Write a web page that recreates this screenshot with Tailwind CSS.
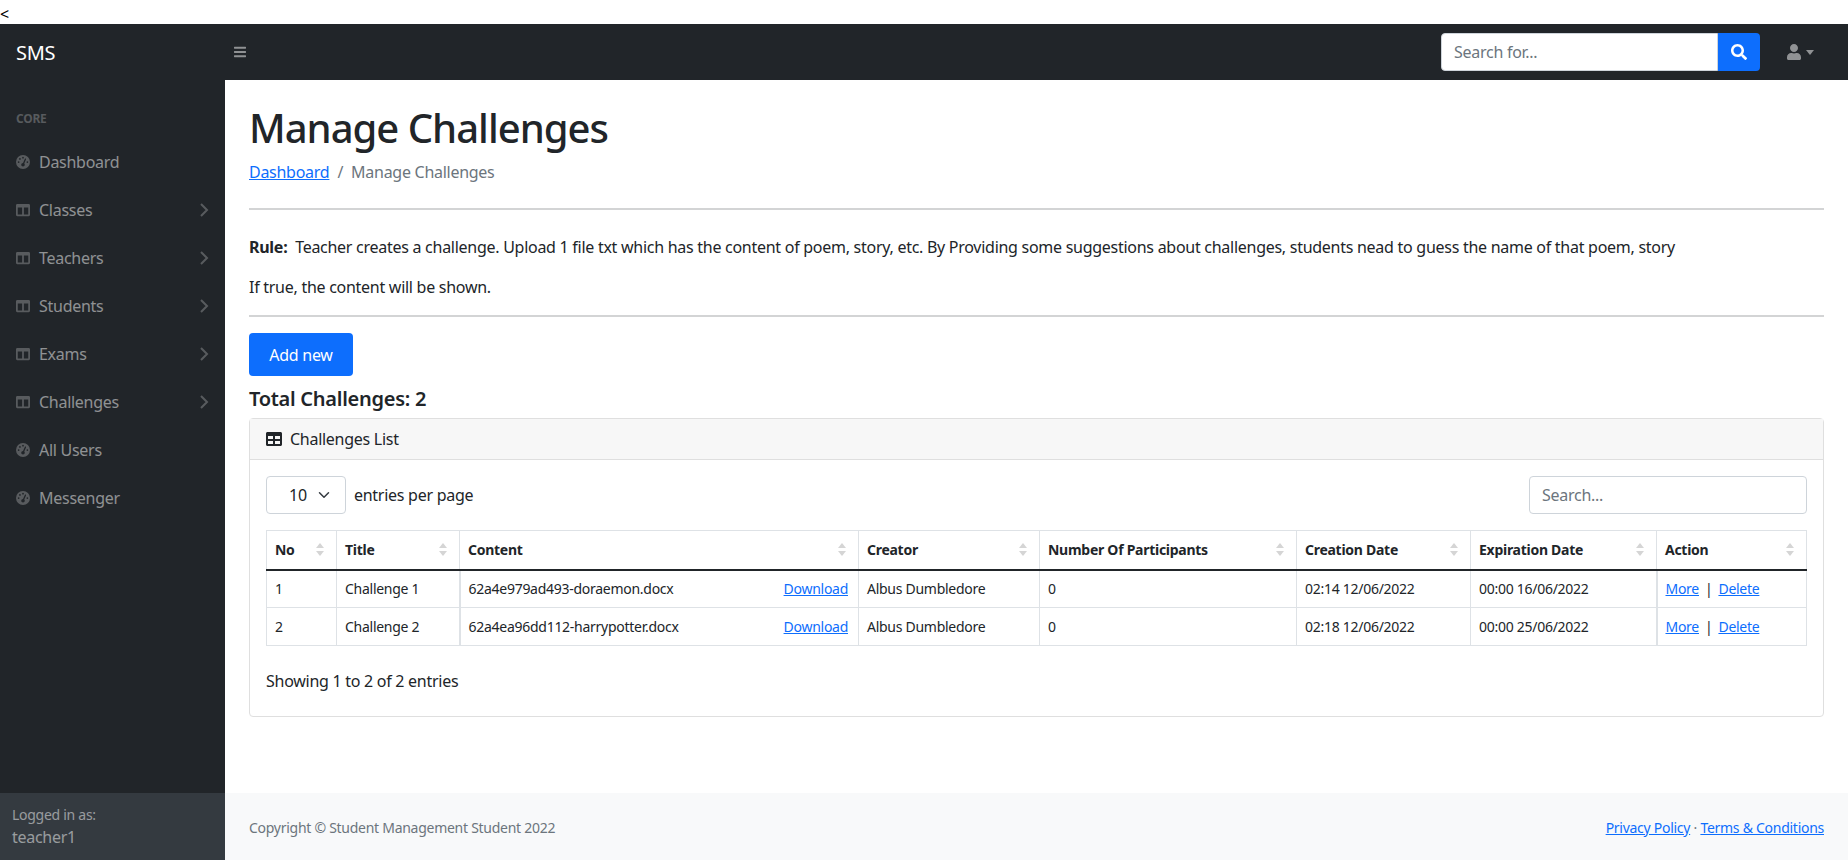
<!DOCTYPE html>
<html lang="en">
<head>
    <meta charset="UTF-8">
    <title>Manage Challenges</title>
    <script src="https://cdn.jsdelivr.net/npm/@tailwindcss/browser@4"></script>
</head>
<body class="h-screen overflow-hidden flex flex-col bg-white text-[#212529] font-['Noto_Sans',sans-serif] text-base tracking-[-0.017em]">
    <div class="h-6 leading-7 text-black shrink-0">&lt;</div>

    <!-- Top nav -->
    <nav class="h-14 shrink-0 bg-[#212529] flex items-center">
        <a href="#" class="w-[225px] pl-4 text-xl text-white pt-0.5">SMS</a>
        <button class="ml-[9px] text-white/50">
            <svg class="w-3 h-3.5" viewBox="0 0 448 512" fill="currentColor"><path d="M16 132h416c8.837 0 16-7.163 16-16V76c0-8.837-7.163-16-16-16H16C7.163 60 0 67.163 0 76v40c0 8.837 7.163 16 16 16zm0 160h416c8.837 0 16-7.163 16-16v-40c0-8.837-7.163-16-16-16H16c-8.837 0-16 7.163-16 16v40c0 8.837 7.163 16 16 16zm0 160h416c8.837 0 16-7.163 16-16v-40c0-8.837-7.163-16-16-16H16c-8.837 0-16 7.163-16 16v40c0 8.837 7.163 16 16 16z"/></svg>
        </button>
        <div class="ml-auto flex items-center">
            <div class="flex h-[38px] w-[319px]">
                <input class="flex-1 min-w-0 bg-white rounded-l px-3 border border-[#ced4da] placeholder:text-[#6c757d]" placeholder="Search for...">
                <button class="w-[42px] bg-[#0d6efd] rounded-r flex items-center justify-center">
                    <svg class="w-4 h-4 text-white" viewBox="0 0 512 512" fill="currentColor"><path d="M505 442.7L405.3 343c-4.5-4.5-10.6-7-17-7H372c27.6-35.3 44-79.7 44-128C416 93.1 322.9 0 208 0S0 93.1 0 208s93.1 208 208 208c48.3 0 92.7-16.4 128-44v16.3c0 6.4 2.5 12.5 7 17l99.7 99.7c9.4 9.4 24.6 9.4 33.9 0l28.3-28.3c9.4-9.4 9.4-24.6.1-34zM208 336c-70.7 0-128-57.2-128-128 0-70.7 57.2-128 128-128 70.7 0 128 57.2 128 128 0 70.7-57.2 128-128 128z"/></svg>
                </button>
            </div>
            <div class="ml-[27px] mr-[34px] flex items-center text-white/50">
                <svg class="w-3.5 h-4" viewBox="0 0 448 512" fill="currentColor"><path d="M224 256c70.7 0 128-57.3 128-128S294.7 0 224 0 96 57.3 96 128s57.3 128 128 128zm89.6 32h-16.7c-22.2 10.2-46.9 16-72.9 16s-50.6-5.8-72.9-16h-16.7C60.2 288 0 348.2 0 422.4V464c0 26.5 21.5 48 48 48h352c26.5 0 48-21.5 48-48v-41.6c0-74.2-60.2-134.4-134.4-134.4z"/></svg>
                <span class="ml-[5px] border-x-[4px] border-t-[5px] border-x-transparent border-t-current"></span>
            </div>
        </div>
    </nav>

    <div class="flex-1 min-h-0 flex">
        <!-- Sidebar -->
        <aside class="w-[225px] shrink-0 bg-[#212529] flex flex-col text-white/50">
            <div class="flex-1">
                <div class="pt-[30px] pb-[10px] px-4 text-xs font-bold leading-[18px] text-white/25">CORE</div>
                <a href="#" class="h-12 px-4 flex items-center">
                    <svg class="w-3.5 h-3.5 mr-[9px] text-white/25" viewBox="0 0 512 512" fill="currentColor"><path d="M0 256a256 256 0 1 1 512 0A256 256 0 1 1 0 256zM288 96a32 32 0 1 0 -64 0 32 32 0 1 0 64 0zM256 416c35.3 0 64-28.7 64-64c0-17.4-6.9-33.1-18.1-44.6L366 161.7c5.3-12.1-.2-26.3-12.3-31.6s-26.3 .2-31.6 12.3L257.9 288c-.6 0-1.3 0-1.9 0c-35.3 0-64 28.7-64 64s28.7 64 64 64zM176 144a32 32 0 1 0 -64 0 32 32 0 1 0 64 0zM96 288a32 32 0 1 0 0-64 32 32 0 1 0 0 64zm352-32a32 32 0 1 0 -64 0 32 32 0 1 0 64 0z"/></svg>
                    Dashboard
                </a>
                <a href="#" class="h-12 px-4 flex items-center">
                    <svg class="w-3.5 h-3.5 mr-[9px] text-white/25" viewBox="0 0 512 512" fill="currentColor"><path d="M464 32H48C21.49 32 0 53.49 0 80v352c0 26.51 21.49 48 48 48h416c26.51 0 48-21.49 48-48V80c0-26.51-21.49-48-48-48zM224 416H64V160h160v256zm224 0H288V160h160v256z"/></svg>
                    Classes
                    <svg class="ml-auto w-2.5 h-3.5 text-white/25" viewBox="0 0 10 14" fill="none" stroke="currentColor" stroke-width="2"><path d="M2 1l6 6-6 6"/></svg>
                </a>
                <a href="#" class="h-12 px-4 flex items-center">
                    <svg class="w-3.5 h-3.5 mr-[9px] text-white/25" viewBox="0 0 512 512" fill="currentColor"><path d="M464 32H48C21.49 32 0 53.49 0 80v352c0 26.51 21.49 48 48 48h416c26.51 0 48-21.49 48-48V80c0-26.51-21.49-48-48-48zM224 416H64V160h160v256zm224 0H288V160h160v256z"/></svg>
                    Teachers
                    <svg class="ml-auto w-2.5 h-3.5 text-white/25" viewBox="0 0 10 14" fill="none" stroke="currentColor" stroke-width="2"><path d="M2 1l6 6-6 6"/></svg>
                </a>
                <a href="#" class="h-12 px-4 flex items-center">
                    <svg class="w-3.5 h-3.5 mr-[9px] text-white/25" viewBox="0 0 512 512" fill="currentColor"><path d="M464 32H48C21.49 32 0 53.49 0 80v352c0 26.51 21.49 48 48 48h416c26.51 0 48-21.49 48-48V80c0-26.51-21.49-48-48-48zM224 416H64V160h160v256zm224 0H288V160h160v256z"/></svg>
                    Students
                    <svg class="ml-auto w-2.5 h-3.5 text-white/25" viewBox="0 0 10 14" fill="none" stroke="currentColor" stroke-width="2"><path d="M2 1l6 6-6 6"/></svg>
                </a>
                <a href="#" class="h-12 px-4 flex items-center">
                    <svg class="w-3.5 h-3.5 mr-[9px] text-white/25" viewBox="0 0 512 512" fill="currentColor"><path d="M464 32H48C21.49 32 0 53.49 0 80v352c0 26.51 21.49 48 48 48h416c26.51 0 48-21.49 48-48V80c0-26.51-21.49-48-48-48zM224 416H64V160h160v256zm224 0H288V160h160v256z"/></svg>
                    Exams
                    <svg class="ml-auto w-2.5 h-3.5 text-white/25" viewBox="0 0 10 14" fill="none" stroke="currentColor" stroke-width="2"><path d="M2 1l6 6-6 6"/></svg>
                </a>
                <a href="#" class="h-12 px-4 flex items-center">
                    <svg class="w-3.5 h-3.5 mr-[9px] text-white/25" viewBox="0 0 512 512" fill="currentColor"><path d="M464 32H48C21.49 32 0 53.49 0 80v352c0 26.51 21.49 48 48 48h416c26.51 0 48-21.49 48-48V80c0-26.51-21.49-48-48-48zM224 416H64V160h160v256zm224 0H288V160h160v256z"/></svg>
                    Challenges
                    <svg class="ml-auto w-2.5 h-3.5 text-white/25" viewBox="0 0 10 14" fill="none" stroke="currentColor" stroke-width="2"><path d="M2 1l6 6-6 6"/></svg>
                </a>
                <a href="#" class="h-12 px-4 flex items-center">
                    <svg class="w-3.5 h-3.5 mr-[9px] text-white/25" viewBox="0 0 512 512" fill="currentColor"><path d="M0 256a256 256 0 1 1 512 0A256 256 0 1 1 0 256zM288 96a32 32 0 1 0 -64 0 32 32 0 1 0 64 0zM256 416c35.3 0 64-28.7 64-64c0-17.4-6.9-33.1-18.1-44.6L366 161.7c5.3-12.1-.2-26.3-12.3-31.6s-26.3 .2-31.6 12.3L257.9 288c-.6 0-1.3 0-1.9 0c-35.3 0-64 28.7-64 64s28.7 64 64 64zM176 144a32 32 0 1 0 -64 0 32 32 0 1 0 64 0zM96 288a32 32 0 1 0 0-64 32 32 0 1 0 0 64zm352-32a32 32 0 1 0 -64 0 32 32 0 1 0 64 0z"/></svg>
                    All Users
                </a>
                <a href="#" class="h-12 px-4 flex items-center">
                    <svg class="w-3.5 h-3.5 mr-[9px] text-white/25" viewBox="0 0 512 512" fill="currentColor"><path d="M0 256a256 256 0 1 1 512 0A256 256 0 1 1 0 256zM288 96a32 32 0 1 0 -64 0 32 32 0 1 0 64 0zM256 416c35.3 0 64-28.7 64-64c0-17.4-6.9-33.1-18.1-44.6L366 161.7c5.3-12.1-.2-26.3-12.3-31.6s-26.3 .2-31.6 12.3L257.9 288c-.6 0-1.3 0-1.9 0c-35.3 0-64 28.7-64 64s28.7 64 64 64zM176 144a32 32 0 1 0 -64 0 32 32 0 1 0 64 0zM96 288a32 32 0 1 0 0-64 32 32 0 1 0 0 64zm352-32a32 32 0 1 0 -64 0 32 32 0 1 0 64 0z"/></svg>
                    Messenger
                </a>
            </div>
            <div class="h-[67px] bg-[#343a40] px-3 pt-3">
                <div class="text-sm leading-5">Logged in as:</div>
                <div class="leading-6">teacher1</div>
            </div>
        </aside>

        <!-- Main -->
        <main class="flex-1 min-w-0 flex flex-col">
            <div class="flex-1 px-6">
                <h1 class="mt-6 text-[40px] leading-[48px] font-medium tracking-[-0.025em]">Manage Challenges</h1>
                <div class="mt-2 flex leading-6">
                    <a href="#" class="text-[#0d6efd] underline">Dashboard</a>
                    <span class="px-2 text-[#6c757d]">/</span>
                    <span class="text-[#6c757d]">Manage Challenges</span>
                </div>
                <hr class="mt-6 border-t-2 border-[#d3d4d5]">
                <p class="mt-[25px] leading-6"><b>Rule:</b>&nbsp; Teacher creates a challenge. Upload 1 file txt which has the content of poem, story, etc. By Providing some suggestions about challenges, students nead to guess the name of that poem, story</p>
                <p class="mt-4 leading-6">If true, the content will be shown.</p>
                <hr class="mt-4 border-t-2 border-[#d3d4d5]">
                <button class="mt-4 h-[43px] w-[104px] bg-[#0d6efd] text-white rounded">Add new</button>
                <h2 class="mt-[11px] text-xl leading-6 font-semibold">Total Challenges: 2</h2>

                <!-- Card -->
                <div class="mt-[7px] border border-[#dfdfdf] rounded">
                    <div class="h-[41px] bg-[#f7f7f7] border-b border-[#dfdfdf] flex items-center px-4">
                        <svg class="w-4 h-4 mr-2" viewBox="0 0 512 512" fill="currentColor"><path d="M464 32H48C21.49 32 0 53.49 0 80v352c0 26.51 21.49 48 48 48h416c26.51 0 48-21.49 48-48V80c0-26.51-21.49-48-48-48zM224 416H64v-96h160v96zm0-160H64v-96h160v96zm224 160H288v-96h160v96zm0-160H288v-96h160v96z"/></svg>
                        Challenges List
                    </div>
                    <div class="p-4 pb-0">
                        <div class="flex items-center justify-between">
                            <div class="flex items-center">
                                <div class="w-20 h-[38px] border border-[#ced4da] rounded flex items-center pl-[22px]">
                                    10
                                    <svg class="ml-[11px] w-3 h-3" viewBox="0 0 16 16" fill="none" stroke="#343a40" stroke-width="2" stroke-linecap="round" stroke-linejoin="round"><path d="M2 5l6 6 6-6"/></svg>
                                </div>
                                <span class="ml-2">entries per page</span>
                            </div>
                            <input class="w-[278px] h-[38px] border border-[#ced4da] rounded px-3 placeholder:text-[#6c757d]" placeholder="Search...">
                        </div>
                        <table class="mt-[16px] w-full table-fixed border-collapse text-sm">
                            <colgroup>
                                <col class="w-[70px]"><col class="w-[123px]"><col class="w-[399px]"><col class="w-[181px]"><col class="w-[257px]"><col class="w-[174px]"><col class="w-[186px]"><col>
                            </colgroup>
                            <thead>
                                <tr class="h-[39px] font-bold text-left">
                                    <th class="border border-[#dee2e6] border-b-2 border-b-[#212529] px-2">
                                        <div class="flex items-center justify-between">No
                                            <span class="flex flex-col gap-[3px] mr-1">
                                                <span class="border-x-[4px] border-b-[5px] border-x-transparent border-b-[#d5d5d5]"></span>
                                                <span class="border-x-[4px] border-t-[5px] border-x-transparent border-t-[#d5d5d5]"></span>
                                            </span>
                                        </div>
                                    </th>
                                    <th class="border border-[#dee2e6] border-b-2 border-b-[#212529] px-2">
                                        <div class="flex items-center justify-between">Title
                                            <span class="flex flex-col gap-[3px] mr-1">
                                                <span class="border-x-[4px] border-b-[5px] border-x-transparent border-b-[#d5d5d5]"></span>
                                                <span class="border-x-[4px] border-t-[5px] border-x-transparent border-t-[#d5d5d5]"></span>
                                            </span>
                                        </div>
                                    </th>
                                    <th class="border border-[#dee2e6] border-b-2 border-b-[#212529] px-2">
                                        <div class="flex items-center justify-between">Content
                                            <span class="flex flex-col gap-[3px] mr-1">
                                                <span class="border-x-[4px] border-b-[5px] border-x-transparent border-b-[#d5d5d5]"></span>
                                                <span class="border-x-[4px] border-t-[5px] border-x-transparent border-t-[#d5d5d5]"></span>
                                            </span>
                                        </div>
                                    </th>
                                    <th class="border border-[#dee2e6] border-b-2 border-b-[#212529] px-2">
                                        <div class="flex items-center justify-between">Creator
                                            <span class="flex flex-col gap-[3px] mr-1">
                                                <span class="border-x-[4px] border-b-[5px] border-x-transparent border-b-[#d5d5d5]"></span>
                                                <span class="border-x-[4px] border-t-[5px] border-x-transparent border-t-[#d5d5d5]"></span>
                                            </span>
                                        </div>
                                    </th>
                                    <th class="border border-[#dee2e6] border-b-2 border-b-[#212529] px-2">
                                        <div class="flex items-center justify-between">Number Of Participants
                                            <span class="flex flex-col gap-[3px] mr-1">
                                                <span class="border-x-[4px] border-b-[5px] border-x-transparent border-b-[#d5d5d5]"></span>
                                                <span class="border-x-[4px] border-t-[5px] border-x-transparent border-t-[#d5d5d5]"></span>
                                            </span>
                                        </div>
                                    </th>
                                    <th class="border border-[#dee2e6] border-b-2 border-b-[#212529] px-2">
                                        <div class="flex items-center justify-between">Creation Date
                                            <span class="flex flex-col gap-[3px] mr-1">
                                                <span class="border-x-[4px] border-b-[5px] border-x-transparent border-b-[#d5d5d5]"></span>
                                                <span class="border-x-[4px] border-t-[5px] border-x-transparent border-t-[#d5d5d5]"></span>
                                            </span>
                                        </div>
                                    </th>
                                    <th class="border border-[#dee2e6] border-b-2 border-b-[#212529] px-2">
                                        <div class="flex items-center justify-between">Expiration Date
                                            <span class="flex flex-col gap-[3px] mr-1">
                                                <span class="border-x-[4px] border-b-[5px] border-x-transparent border-b-[#d5d5d5]"></span>
                                                <span class="border-x-[4px] border-t-[5px] border-x-transparent border-t-[#d5d5d5]"></span>
                                            </span>
                                        </div>
                                    </th>
                                    <th class="border border-[#dee2e6] border-b-2 border-b-[#212529] px-2">
                                        <div class="flex items-center justify-between">Action
                                            <span class="flex flex-col gap-[3px] mr-1">
                                                <span class="border-x-[4px] border-b-[5px] border-x-transparent border-b-[#d5d5d5]"></span>
                                                <span class="border-x-[4px] border-t-[5px] border-x-transparent border-t-[#d5d5d5]"></span>
                                            </span>
                                        </div>
                                    </th>
                                </tr>
                            </thead>
                            <tbody>
                                <tr class="h-[38px]">
                                    <td class="border border-[#dee2e6] px-2">1</td>
                                    <td class="border border-[#dee2e6] px-2">Challenge 1</td>
                                    <td class="border border-[#dee2e6] border-l-2 px-2">
                                        <div class="flex justify-between">62a4e979ad493-doraemon.docx <a href="#" class="text-[#0d6efd] underline mr-0.5">Download</a></div>
                                    </td>
                                    <td class="border border-[#dee2e6] px-2">Albus Dumbledore</td>
                                    <td class="border border-[#dee2e6] px-2">0</td>
                                    <td class="border border-[#dee2e6] px-2">02:14 12/06/2022</td>
                                    <td class="border border-[#dee2e6] px-2">00:00 16/06/2022</td>
                                    <td class="border border-[#dee2e6] border-l-2 px-2"><a href="#" class="text-[#0d6efd] underline">More</a><span class="mx-[6px]">|</span><a href="#" class="text-[#0d6efd] underline">Delete</a></td>
                                </tr>
                                <tr class="h-[38px]">
                                    <td class="border border-[#dee2e6] px-2">2</td>
                                    <td class="border border-[#dee2e6] px-2">Challenge 2</td>
                                    <td class="border border-[#dee2e6] border-l-2 px-2">
                                        <div class="flex justify-between">62a4ea96dd112-harrypotter.docx <a href="#" class="text-[#0d6efd] underline mr-0.5">Download</a></div>
                                    </td>
                                    <td class="border border-[#dee2e6] px-2">Albus Dumbledore</td>
                                    <td class="border border-[#dee2e6] px-2">0</td>
                                    <td class="border border-[#dee2e6] px-2">02:18 12/06/2022</td>
                                    <td class="border border-[#dee2e6] px-2">00:00 25/06/2022</td>
                                    <td class="border border-[#dee2e6] border-l-2 px-2"><a href="#" class="text-[#0d6efd] underline">More</a><span class="mx-[6px]">|</span><a href="#" class="text-[#0d6efd] underline">Delete</a></td>
                                </tr>
                            </tbody>
                        </table>
                        <div class="mt-[23px] h-[47px] leading-6">Showing 1 to 2 of 2 entries</div>
                    </div>
                </div>
            </div>

            <footer class="h-[67px] bg-[#f8f9fa] px-6 pt-0.5 flex items-center justify-between text-sm text-[#6c757d]">
                <div>Copyright © Student Management Student 2022</div>
                <div><a href="#" class="text-[#0d6efd] underline">Privacy Policy</a> · <a href="#" class="text-[#0d6efd] underline">Terms &amp; Conditions</a></div>
            </footer>
        </main>
    </div>
</body>
</html>
